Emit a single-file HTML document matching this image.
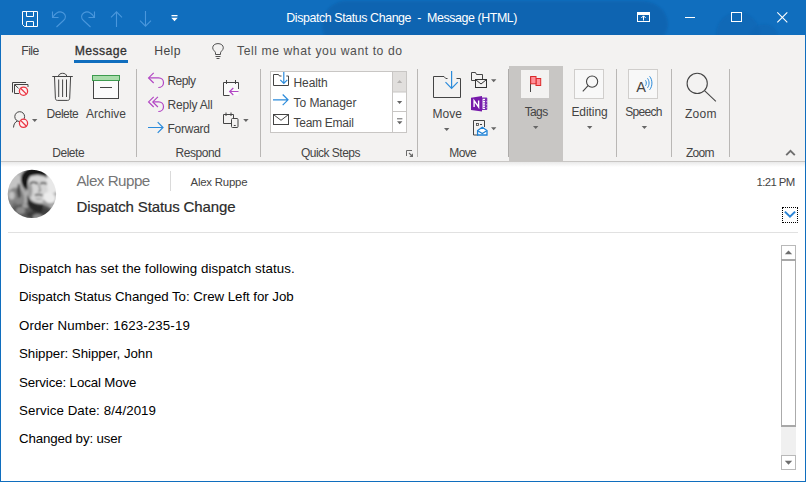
<!DOCTYPE html>
<html lang="en">
<head>
<meta charset="utf-8">
<title>Dispatch Status Change - Message (HTML)</title>
<style>
html,body{margin:0;padding:0;}
body{width:806px;height:482px;overflow:hidden;background:#fff;position:relative;
  font-family:"Liberation Sans",Arial,sans-serif;}
#win{position:absolute;left:0;top:0;width:806px;height:482px;overflow:hidden;background:#fff;}
.abs{position:absolute;}
.t{position:absolute;white-space:pre;font-family:"Liberation Sans",Arial,sans-serif;}
#titlebar{left:0;top:0;width:806px;height:35px;background:#106ebe;}
#tabs{left:1px;top:35px;width:804px;height:31px;background:#f3f2f1;}
#ribbon{left:1px;top:66px;width:804px;height:95px;background:#f3f2f1;}
#ribline{left:1px;top:161px;width:804px;height:1px;background:#c8c6c4;}
#ribshadow{left:1px;top:162px;width:804px;height:5px;background:linear-gradient(#e9e9e9,#ffffff);}
#bl{left:0;top:35px;width:1px;height:447px;background:#106ebe;}
#br{left:805px;top:35px;width:1px;height:447px;background:#106ebe;}
#bb{left:0;top:481px;width:806px;height:1px;background:#106ebe;}
.sep{position:absolute;width:1px;background:#b9b7b5;top:69px;height:88px;}
#msgul{left:74px;top:60px;width:54px;height:3px;background:#106ebe;}
#tagsbg{left:509px;top:66px;width:54px;height:95px;background:#c8c6c4;}
.ibox{position:absolute;width:30px;height:30px;top:69px;background:#f8f8f8;border:1px solid #d0cecc;box-sizing:border-box;}
#qs{left:270px;top:71px;width:137px;height:62px;box-sizing:border-box;border:1px solid #c8c6c4;background:#fff;}
#qsbtn{left:392px;top:72px;width:14px;height:60px;background:#f3f2f1;border-left:1px solid #c8c6c4;box-sizing:border-box;}
#hline{left:8px;top:232px;width:790px;height:1px;background:#e1e1e1;}
#avatar{left:8px;top:170px;width:48px;height:48px;border-radius:50%;overflow:hidden;}
#hsep{left:170px;top:171px;width:1px;height:20px;background:#dadada;}
#dotbox{left:782px;top:207px;width:16px;height:16px;box-sizing:border-box;border:1px dotted #000;background:#fff;}
svg{position:absolute;overflow:visible;}
</style>
</head>
<body>
<div id="win">
<div id="titlebar" class="abs"></div>
<div id="tabs" class="abs"></div>
<div id="ribbon" class="abs"></div>
<div id="ribline" class="abs"></div>
<div id="ribshadow" class="abs"></div>
<div id="tagsbg" class="abs"></div>
<div id="msgul" class="abs"></div>
<div class="sep" style="left:136px"></div>
<div class="sep" style="left:260px"></div>
<div class="sep" style="left:417px"></div>
<div class="sep" style="left:508px;background:#aeacaa"></div>
<div class="sep" style="left:616px"></div>
<div class="sep" style="left:671px"></div>
<div class="sep" style="left:729px"></div>
<div id="qs" class="abs"></div>
<div id="qsbtn" class="abs"></div>
<div class="ibox" style="left:521px;top:70px;width:28px;height:28px;background:#f3f2f1;border-color:#f3f2f1"></div>
<div class="ibox" style="left:574px"></div>
<div class="ibox" style="left:628px"></div>
<div id="hline" class="abs"></div>
<div id="hsep" class="abs"></div>
<div id="dotbox" class="abs"></div>
<div id="avatar" class="abs"></div>
<svg id="icons" width="806" height="482" viewBox="0 0 806 482" style="left:0;top:0" fill="none" stroke-linecap="butt" stroke-linejoin="miter">
<!-- ===== title bar background pattern ===== -->
<defs>
  <clipPath id="tbclip"><rect x="0" y="0" width="806" height="35"/></clipPath>
  <clipPath id="avclip"><circle cx="31.9" cy="193.9" r="24.2"/></clipPath>
  <filter id="avblur" x="-10%" y="-10%" width="120%" height="120%"><feGaussianBlur stdDeviation="0.8"/></filter>
  <filter id="tbblur"><feGaussianBlur stdDeviation="1.2"/></filter>
</defs>
<g clip-path="url(#tbclip)"><g stroke="none" fill="#0b5aa3" opacity="0.45" filter="url(#tbblur)">
  <path d="M345 1 H640 C660 1 668 14 668 24 C668 34 660 44 640 44 H335 C322 40 318 24 326 12 C330 5 338 1 345 1 Z"/>
  <circle cx="738" cy="34" r="22" opacity="0.6"/>
  <circle cx="764" cy="38" r="14" opacity="0.6"/>
</g></g>
<!-- ===== quick access toolbar ===== -->
<g stroke="#fff" stroke-width="1">
  <!-- save -->
  <path d="M22.5 11.5 H37.5 V26.5 H24.5 L22.5 24.5 Z"/>
  <path d="M26.5 11.5 V16.5 H33.5 V11.5"/>
  <path d="M26.5 26.5 V21.5 H33.5 V26.5"/>
</g>
<g stroke="#4a97dc" stroke-width="1.1">
  <!-- undo -->
  <path d="M52.5 11.5 V17.5 H58.5"/>
  <path d="M52.8 17.2 C56 12.5 60 11 63 12.8 C66 14.6 66.3 18 63.5 20.5 L56.5 27"/>
  <!-- redo -->
  <path d="M94.5 11.5 V17.5 H88.5"/>
  <path d="M94.2 17.2 C91 12.5 87 11 84 12.8 C81 14.6 80.7 18 83.500 20.5 L90.5 27"/>
  <!-- up -->
  <path d="M116.500 27 V11.800 M111 17.300 L116.500 11.800 L122 17.300"/>
  <!-- down -->
  <path d="M145.500 11 V26.200 M140 20.700 L145.500 26.200 L151 20.700"/>
</g>
<g fill="#fff" stroke="none">
  <rect x="171.500" y="15" width="6" height="1.300"/>
  <path d="M171.300 17.700 H177.700 L174.500 21.200 Z"/>
</g>
<!-- window buttons -->
<g stroke="#fff" stroke-width="1">
  <rect x="637.500" y="12.500" width="12" height="9"/>
  <path d="M637.500 13.500 H649.500 M637.500 14.500 H649.500" />
  <path d="M643.500 20.500 V16 M641.300 18 L643.500 15.800 L645.700 18" stroke-width="1"/>
  <path d="M685 17.500 H695"/>
  <rect x="731.500" y="12.500" width="10" height="9"/>
  <path d="M777.300 12.300 L787.300 22.300 M787.300 12.300 L777.300 22.300" stroke-width="1.100"/>
</g>
<!-- ===== lightbulb ===== -->
<g stroke="#505050" stroke-width="1">
  <path d="M215.500 54.500 V52.800 C215.500 51.500 212.700 50.200 212.700 47.800 C212.700 45.200 215 43.600 218 43.600 C221 43.600 223.300 45.200 223.300 47.800 C223.300 50.200 220.500 51.500 220.500 52.800 V54.500 Z"/>
  <path d="M215.500 56.500 H220.500 M216.500 58.500 H219.500"/>
</g>
<!-- ===== Delete group ===== -->
<g stroke="#444" stroke-width="1">
  <!-- ignore -->
  <path d="M12.500 92.500 V82.500 H26"/>
  <path d="M19 93.500 H14.500 V84.500 H28 V87"/>
  <path d="M14.800 84.800 L18.500 88.300"/>
  <!-- junk person -->
  <circle cx="19.700" cy="116.600" r="4.900"/>
  <path d="M13.500 127.500 C13.700 123.800 15.300 121.800 17.500 121"/>
  <!-- trash -->
  <path d="M52.300 76.500 H72.800"/>
  <path d="M58.500 76.300 C58.500 72.300 66.700 72.300 66.700 76.300"/>
  <path d="M54.500 76.500 L55.400 98.300 C55.450 99.600 56.200 100.400 57.500 100.400 H67.600 C68.900 100.400 69.650 99.600 69.700 98.300 L70.600 76.500"/>
  <path d="M58.700 79.500 V97 M62.600 79.500 V97 M66.500 79.500 V97"/>
</g>
<!-- red no-signs -->
<g stroke="#ea3543" stroke-width="1.300" fill="#fdf3f3">
  <circle cx="23.500" cy="91.200" r="4.100"/>
  <path d="M20.600 88.300 L26.400 94.100"/>
  <circle cx="23.500" cy="123.300" r="4.100"/>
  <path d="M20.600 120.400 L26.400 126.200"/>
</g>
<!-- archive -->
<rect x="93.500" y="80.500" width="25" height="18" fill="#fbfbfb" stroke="#444"/>
<rect x="92.500" y="75.500" width="27" height="5" fill="#a9dcab" stroke="#3d9b4f"/>
<path d="M100 87.500 H112" stroke="#444"/>
<!-- dropdown arrows (ribbon) -->
<g fill="#666" stroke="none">
  <path d="M32 119 H37.400 L34.700 122 Z"/>
  <path d="M243.200 119 H248.600 L245.900 122 Z"/>
  <path d="M491 79.200 H496.400 L493.700 82.200 Z"/>
  <path d="M491 127.200 H496.400 L493.700 130.200 Z"/>
  <path d="M444 128 H449.400 L446.700 131 Z"/>
  <path d="M533 126 H538.400 L535.700 129 Z"/>
  <path d="M587 126 H592.400 L589.700 129 Z"/>
  <path d="M641.700 126 H647.100 L644.400 129 Z"/>
</g>
<!-- ===== Respond group ===== -->
<rect x="223.500" y="82.500" width="15" height="13" fill="#fafafa" stroke="none"/>
<g stroke="#b247c4" stroke-width="1.200">
  <!-- reply -->
  <path d="M153.700 72.800 L148.600 77.900 L153.700 83"/>
  <path d="M148.800 77.900 H158.600 C161.400 77.900 163.500 80 163.500 82.700 C163.500 85.400 161.400 87.500 158.300 87.500"/>
  <!-- reply all -->
  <path d="M153.700 96.800 L148.600 101.900 L153.700 107"/>
  <path d="M157.900 96.800 L152.800 101.900 L157.900 107"/>
  <path d="M153 101.900 H158.600 C161.400 101.900 163.500 104 163.500 106.700 C163.500 109.400 161.400 111.500 158.300 111.500"/>
  <!-- meeting arrow -->
  <path d="M238.500 91.500 H229.800 M233.300 88 L229.700 91.500 L233.300 95"/>
</g>
<g stroke="#2b8bdb" stroke-width="1.200">
  <!-- forward -->
  <path d="M148 127.500 H163 M157.700 122.200 L163 127.500 L157.700 132.800"/>
  <!-- to manager -->
  <path d="M273 99.800 H288 M282.700 94.500 L288 99.800 L282.700 105.100"/>
  <!-- health arrow -->
  <path d="M283.800 72 V83.300 M280.300 79.800 L283.800 83.300 L287.300 79.800"/>
  <!-- move arrow -->
  <path d="M451.600 71 V88.300 M445.500 82.200 L451.600 88.300 L457.700 82.200"/>
</g>
<g stroke="#444" stroke-width="1">
  <!-- meeting calendar -->
  <path d="M229.500 95.500 H223.500 V82.500 H238.500 V89"/>
  <path d="M226.500 80 V84 M235.500 80 V84"/>
  <!-- more: calendar + phone -->
  <path d="M231 123.500 H223.500 V114.500 H233.500 V118"/>
  <path d="M226 112.500 V116 M231 112.500 V116"/>
  <rect x="231.500" y="118.500" width="6.500" height="9" rx="1" />
  <path d="M233.800 125.500 H235.700"/>
  <!-- health folder -->
  <path d="M281.500 76 H279.500 L278.500 74.500 H273.500 V85.500 H288.500 V76 H286.300"/>
  <!-- team email envelope -->
  <rect x="273.500" y="114.500" width="15" height="10"/>
  <path d="M273.800 114.800 L281 120.300 L288.200 114.800"/>
  <!-- move folder -->
  <path d="M447.500 78.500 H445.800 L444 76.500 H433.500 V97.500 H460.500 V78.500 H456.500"/>
  <!-- rules folder + envelope -->
  <path d="M475.500 80.500 H471.500 V72.500 H475.500 L476.500 74.500 H482.500 V79"/>
  <rect x="475.500" y="79.500" width="11" height="8" fill="#f3f2f1" stroke="#333"/>
  <path d="M475.800 79.800 L481 84 L486.200 79.800" stroke="#333"/>
  <!-- actions: document -->
  <path d="M478 135 H473.500 V120.500 H484.500 V127"/>
  <rect x="476.500" y="123.500" width="2" height="2" stroke-width="0.800"/>
  <path d="M480 124.500 H482" stroke-width="1"/>
</g>
<!-- actions: blue open envelope -->
<g stroke="#1f82d6" stroke-width="1.300">
  <path d="M477.600 135 V130.500 L482.300 127.300 L487 130.500 V135 Z" fill="#fff"/>
  <path d="M477.700 130.800 L482.300 133.500 L486.800 130.800"/>
</g>
<!-- onenote -->
<g stroke="none">
  <rect x="480" y="97.600" width="7.300" height="12.400" rx="1" fill="#7d2db3"/>
  <rect x="482.600" y="98.800" width="2.400" height="10.200" fill="#fff"/>
  <path d="M483.300 100.500 H485 M483.300 102.800 H485 M483.300 105.100 H485 M483.300 107.400 H485" stroke="#7d2db3" stroke-width="0.900"/>
  <path d="M486.400 101.600 H487.400 M486.400 104.600 H487.400 M486.400 107.600 H487.400" stroke="#f3f2f1" stroke-width="0.700"/>
  <path d="M471 97.700 L482 96 V111.600 L471 109.900 Z" fill="#7719aa"/>
  <path d="M474.100 107 V100.600 L478.600 107 V100.600" stroke="#fff" stroke-width="1.400" fill="none"/>
</g>
<!-- ===== quick steps scroll buttons ===== -->
<g stroke="none">
  <rect x="393" y="72" width="13" height="20" fill="#e1dfdd"/>
  <rect x="393" y="92" width="13" height="40" fill="#fff"/>
  <path d="M392.500 92 H406.500 M392.500 111.500 H406.500" stroke="#c8c6c4" stroke-width="1"/>
  <path d="M397 83 H402.200 L399.600 80.100 Z" fill="#b5b3b1"/>
  <path d="M397 101 H402.200 L399.600 103.900 Z" fill="#666"/>
  <rect x="397" y="118.300" width="5.400" height="1" fill="#666"/>
  <path d="M397 121.300 H402.400 L399.700 124.300 Z" fill="#666"/>
</g>
<!-- dialog launcher -->
<g stroke="#6a6a6a" stroke-width="1">
  <path d="M406.500 156 V150.500 H412"/>
  <path d="M409 153 L412.500 156.500" stroke-width="1.100"/>
  <path d="M413 153.300 V157 H409.300 Z" fill="#6a6a6a" stroke="none"/>
</g>
<!-- ===== tags flag ===== -->
<path d="M530.500 76.500 V92" stroke="#444" stroke-width="1"/>
<rect x="536" y="78.500" width="4.700" height="7" fill="#ff8f98" stroke="#dc2a2a" stroke-width="1"/>
<rect x="530.700" y="76.500" width="5.300" height="7.300" fill="#ff8f98" stroke="#dc2a2a" stroke-width="1"/>
<!-- editing magnifier -->
<g stroke="#444" stroke-width="1.100">
  <circle cx="592.100" cy="81.600" r="5.600"/>
  <path d="M588.100 85.700 L582.800 91.300"/>
</g>
<!-- speech -->
<g stroke="#2b8bdb" stroke-width="1">
  <path d="M645.500 80.300 C646.600 81.800 646.600 84.300 645.500 85.800"/>
  <path d="M647.500 78.300 C649.600 81 649.600 85.100 647.500 87.800"/>
  <path d="M649.600 76.300 C652.700 80 652.700 86.100 649.600 89.800"/>
</g>
<!-- zoom magnifier -->
<g stroke="#444" stroke-width="1.100">
  <circle cx="697.200" cy="83.400" r="10.100"/>
  <path d="M704.500 90.600 L715.900 101.300"/>
</g>
<!-- ribbon collapse chevron -->
<path d="M786.200 155.200 L790.500 150.900 L794.800 155.200" stroke="#6e6e6e" stroke-width="1.900"/>
<!-- ===== avatar ===== -->
<g clip-path="url(#avclip)"><g filter="url(#avblur)" stroke="none" transform="translate(7.6 169.6)">
  <rect x="-2" y="-2" width="52" height="52" fill="#b0b0b0"/>
  <ellipse cx="6" cy="13" rx="9" ry="9" fill="#c4c4c4"/>
  <ellipse cx="8" cy="30" rx="9" ry="12" fill="#868686"/>
  <ellipse cx="4" cy="26" rx="3" ry="4" fill="#c2c2c2"/>
  <path d="M10.500 14 L12.500 15 L13.500 27 L10.500 29 L9 22 Z" fill="#4c4c4c"/>
  <ellipse cx="7" cy="36" rx="3" ry="3" fill="#6e6e6e"/>
  <ellipse cx="44" cy="12" rx="8" ry="12" fill="#e8e8e8"/>
  <ellipse cx="24" cy="47" rx="25" ry="14" fill="#585858"/>
  <ellipse cx="13" cy="41" rx="4.500" ry="3.500" fill="#8c8c8c"/>
  <ellipse cx="18" cy="36" rx="3.500" ry="2.500" fill="#a0a0a0"/>
  <ellipse cx="24" cy="45" rx="5" ry="3" fill="#3e3e3e"/>
  <ellipse cx="35" cy="42" rx="7" ry="4" fill="#404040"/>
  <ellipse cx="30" cy="47" rx="5" ry="2.500" fill="#8a8a8a"/>
  <ellipse cx="18" cy="19" rx="2.200" ry="3.500" fill="#9a9a9a"/>
  <path d="M19.500 8 C22 5 34 4 38.500 8 L40 20 C40 26 37 32 33 33.500 C29 34 24 31 21.500 27 C19.500 23 19 14 19.500 8 Z" fill="#d6d6d6"/>
  <ellipse cx="22.500" cy="21" rx="2.300" ry="7" fill="#9c9c9c"/>
  <path d="M19.500 25 L23 31 L29 35 L36 35 L34 43 L26 42 L20 36 Z" fill="#262626"/>
  <path d="M13.200 10 C13.500 2 20 -2 27 -2 C34 -2 39.500 2 40 8.500 C36 5.500 30 4.500 24.500 6 C21.500 7 20.500 10 20.300 14 L19.800 20.500 C16.500 19.500 13.800 16 13.200 10 Z" fill="#141414"/>
  <path d="M22.300 14 C24.500 12.200 28 12.300 30.200 14.200" stroke="#222" stroke-width="1.800" fill="none"/>
  <path d="M32.800 14.200 C34.500 12.800 37.300 12.900 39 14.400" stroke="#222" stroke-width="1.700" fill="none"/>
  <path d="M31.300 15 L32.800 21.300 L30.500 22" stroke="#7c7c7c" stroke-width="1.300" fill="none"/>
  <path d="M27.300 25.700 C29.500 24.700 33 24.900 35.200 26" stroke="#2e2e2e" stroke-width="1.500" fill="none"/>
  <ellipse cx="31" cy="29.500" rx="3.500" ry="1.300" fill="#b4b4b4"/>
  <ellipse cx="41.800" cy="28" rx="6.500" ry="5.300" transform="rotate(25 41.800 28)" fill="#ececec"/>
  <path d="M35.800 30.500 C38.500 34.800 43 35.800 47.500 33.500" stroke="#8c8c8c" stroke-width="1.200" fill="none"/>
</g></g>
<!-- ===== header: dotted chevron box ===== -->
<path d="M784.900 211.600 L790 216.700 L795.100 211.600" stroke="#2b84d6" stroke-width="2" />
<!-- ===== scrollbar ===== -->
<g stroke="none">
  <rect x="781" y="245" width="15" height="225" fill="#f0f0f0"/>
  <rect x="781.500" y="259.500" width="14" height="167" fill="#fff" stroke="#ababab" stroke-width="1"/>
  <rect x="781.500" y="245.500" width="14" height="14" fill="#fff" stroke="#b9b9b9" stroke-width="1"/>
  <rect x="781.500" y="455.500" width="14" height="14" fill="#fff" stroke="#b9b9b9" stroke-width="1"/>
  <path d="M784.800 254.300 H792.200 L788.500 250.400 Z" fill="#6e6e6e"/>
  <rect x="781" y="259" width="15" height="2" fill="#a8a8a8"/>
  <rect x="781" y="425" width="15" height="2" fill="#a8a8a8"/>
  <path d="M784.800 460.800 H792.200 L788.500 464.700 Z" fill="#6e6e6e"/>
</g>
</svg>
<span class="t" style="left:636.200px;top:77.500px;font-size:14.500px;line-height:18px;color:#444;">A</span>

<span class="t" style="left:286.3px;top:9.5px;font-size:12.4px;line-height:16px;letter-spacing:-0.401px;color:#fff;white-space:pre;">Dispatch Status Change  -  Message (HTML)</span>
<span class="t" style="left:21.3px;top:42.6px;font-size:12.2px;line-height:16px;letter-spacing:-0.580px;color:#444;">File</span>
<span class="t" style="left:74.7px;top:42.6px;font-size:12.2px;line-height:16px;letter-spacing:0.441px;color:#333;-webkit-text-stroke:0.3px #333;">Message</span>
<span class="t" style="left:154.2px;top:42.6px;font-size:12.2px;line-height:16px;letter-spacing:0.407px;color:#444;">Help</span>
<span class="t" style="left:237.0px;top:42.6px;font-size:12.2px;line-height:16px;letter-spacing:0.562px;color:#505050;">Tell me what you want to do</span>
<span class="t" style="left:46.5px;top:105.5px;font-size:12px;line-height:16px;letter-spacing:-0.478px;color:#444;">Delete</span>
<span class="t" style="left:86.0px;top:105.5px;font-size:12px;line-height:16px;letter-spacing:-0.003px;color:#444;">Archive</span>
<span class="t" style="left:52.3px;top:145.0px;font-size:12px;line-height:16px;letter-spacing:-0.478px;color:#444;">Delete</span>
<span class="t" style="left:167.5px;top:72.8px;font-size:12px;line-height:16px;letter-spacing:-0.547px;color:#444;">Reply</span>
<span class="t" style="left:167.5px;top:96.5px;font-size:12px;line-height:16px;letter-spacing:-0.186px;color:#444;">Reply All</span>
<span class="t" style="left:167.5px;top:120.7px;font-size:12px;line-height:16px;letter-spacing:-0.253px;color:#444;">Forward</span>
<span class="t" style="left:175.5px;top:145.0px;font-size:12px;line-height:16px;letter-spacing:-0.424px;color:#444;">Respond</span>
<span class="t" style="left:293.5px;top:74.8px;font-size:12px;line-height:16px;letter-spacing:-0.098px;color:#444;">Health</span>
<span class="t" style="left:293.5px;top:94.9px;font-size:12px;line-height:16px;letter-spacing:-0.042px;color:#444;">To Manager</span>
<span class="t" style="left:293.5px;top:115.0px;font-size:12px;line-height:16px;letter-spacing:-0.265px;color:#444;">Team Email</span>
<span class="t" style="left:300.9px;top:145.0px;font-size:12px;line-height:16px;letter-spacing:-0.510px;color:#444;">Quick Steps</span>
<span class="t" style="left:432.5px;top:105.6px;font-size:12px;line-height:16px;letter-spacing:0.052px;color:#444;">Move</span>
<span class="t" style="left:449.3px;top:145.0px;font-size:12px;line-height:16px;letter-spacing:-0.615px;color:#444;">Move</span>
<span class="t" style="left:524.7px;top:103.5px;font-size:12px;line-height:16px;letter-spacing:-0.620px;color:#444;">Tags</span>
<span class="t" style="left:571.4px;top:103.5px;font-size:12px;line-height:16px;letter-spacing:-0.051px;color:#444;">Editing</span>
<span class="t" style="left:625.3px;top:103.5px;font-size:12px;line-height:16px;letter-spacing:-0.701px;color:#444;">Speech</span>
<span class="t" style="left:684.9px;top:105.9px;font-size:12px;line-height:16px;letter-spacing:0.271px;color:#444;">Zoom</span>
<span class="t" style="left:686.0px;top:145.0px;font-size:12px;line-height:16px;letter-spacing:-0.729px;color:#444;">Zoom</span>
<span class="t" style="left:76.5px;top:171.0px;font-size:15.2px;line-height:20px;letter-spacing:-0.526px;color:#757575;">Alex Ruppe</span>
<span class="t" style="left:190.5px;top:175.0px;font-size:11.4px;line-height:15px;letter-spacing:-0.210px;color:#444;">Alex Ruppe</span>
<span class="t" style="left:76.5px;top:197.0px;font-size:15px;line-height:20px;letter-spacing:-0.132px;color:#2b2b2b;-webkit-text-stroke:0.2px #2b2b2b;">Dispatch Status Change</span>
<span class="t" style="left:756.4px;top:174.9px;font-size:11.4px;line-height:15px;letter-spacing:-0.587px;color:#444;">1:21 PM</span>
<span class="t" style="left:19.0px;top:260.1px;font-size:13.3px;line-height:17px;letter-spacing:0.080px;color:#000;">Dispatch has set the following dispatch status.</span>
<span class="t" style="left:19.0px;top:287.9px;font-size:13.3px;line-height:17px;letter-spacing:-0.051px;color:#000;">Dispatch Status Changed To: Crew Left for Job</span>
<span class="t" style="left:19.0px;top:316.8px;font-size:13.3px;line-height:17px;letter-spacing:0.126px;color:#000;">Order Number: 1623-235-19</span>
<span class="t" style="left:19.0px;top:345.3px;font-size:13.3px;line-height:17px;letter-spacing:-0.045px;color:#000;">Shipper: Shipper, John</span>
<span class="t" style="left:19.0px;top:373.8px;font-size:13.3px;line-height:17px;letter-spacing:-0.124px;color:#000;">Service: Local Move</span>
<span class="t" style="left:19.0px;top:402.1px;font-size:13.3px;line-height:17px;letter-spacing:0.082px;color:#000;">Service Date: 8/4/2019</span>
<span class="t" style="left:19.0px;top:430.3px;font-size:13.3px;line-height:17px;letter-spacing:-0.131px;color:#000;">Changed by: user</span>
<div id="bl" class="abs"></div>
<div id="br" class="abs"></div>
<div id="bb" class="abs"></div>
</div>
</body>
</html>
